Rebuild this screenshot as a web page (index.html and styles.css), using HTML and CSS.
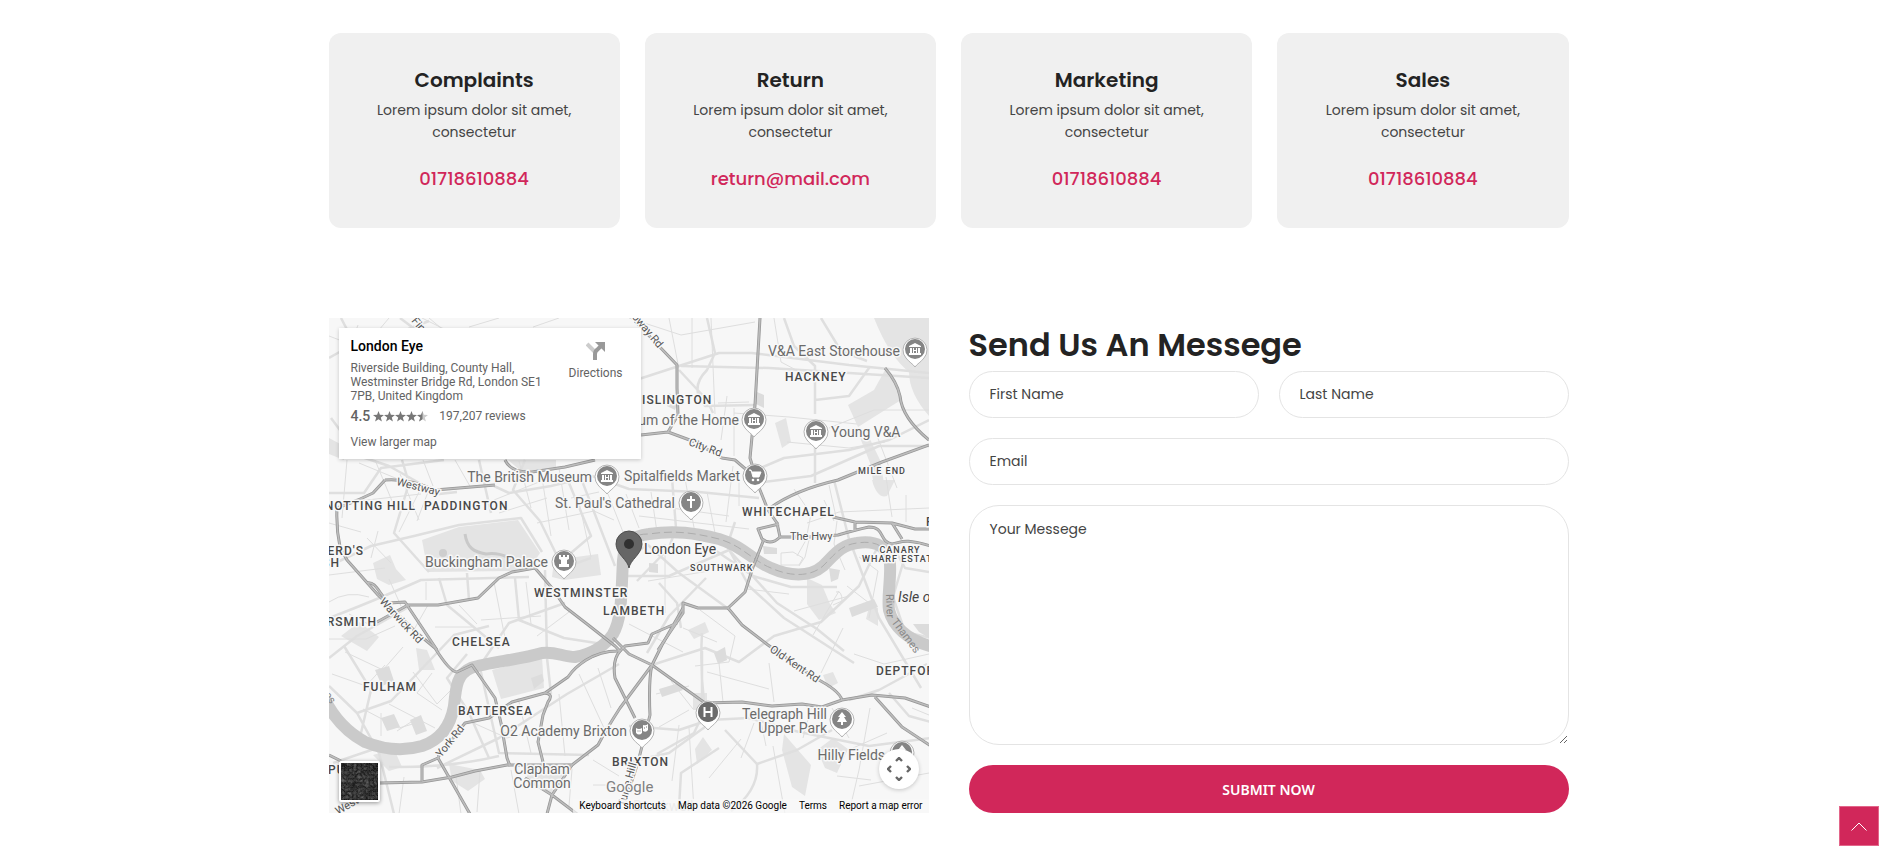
FILE: index.html
```html
<!DOCTYPE html>
<html lang="en">
<head>
<meta charset="utf-8">
<meta name="viewport" content="width=device-width, initial-scale=1">
<title>Contact</title>
<link rel="stylesheet" href="styles.css">
</head>
<body>
<main class="page">
  <section class="cards">
    <article class="card"><h3 class="card-title">Complaints</h3><p class="card-text">Lorem ipsum dolor sit amet, consectetur</p><a class="card-link" href="tel:01718610884">01718610884</a></article>
    <article class="card"><h3 class="card-title">Return</h3><p class="card-text">Lorem ipsum dolor sit amet, consectetur</p><a class="card-link" href="mailto:return@mail.com">return@mail.com</a></article>
    <article class="card"><h3 class="card-title">Marketing</h3><p class="card-text">Lorem ipsum dolor sit amet, consectetur</p><a class="card-link" href="tel:01718610884">01718610884</a></article>
    <article class="card"><h3 class="card-title">Sales</h3><p class="card-text">Lorem ipsum dolor sit amet, consectetur</p><a class="card-link" href="tel:01718610884">01718610884</a></article>
  </section>

  <section class="contact">
    <div class="map">
      <svg class="map-canvas" viewBox="0 0 600 495" preserveAspectRatio="xMidYMid slice" role="img" aria-label="Map of London">
        <defs>
          <path id="river" d="M-4 382C4 398 18 414 36 424C56 432 76 433 93 428C114 421 122 405 125 388C127 368 128 356 142 350C160 344 190 342 213 335C226 333 234 339 246 339C262 336 276 328 284 316C293 300 292 280 294 242C295 224 304 218 320 216C346 212 366 215 390 221C414 228 424 243 442 250C460 258 480 260 494 248C506 236 512 227 528 225C548 222 559 229 561 246C562 262 558 280 560 292C564 308 578 322 604 329"/>
          <g id="roads">
            <path d="M431 0L426 87L421 140L431 172L439 192L448 205L451 219Q442 228 433 221L429 211L450 206M435 221L424 249L416 274Q411 279 399 290H369L354 285V295L329 332"/>
            <path d="M306 3L348 47V70L349 97L339 114L312 117M339 114L366 124L393 140L406 142L420 154"/>
            <path d="M556 50Q568 64 571 78Q573 100 600 122M600 127L553 144L509 162Q466 172 441 190"/>
            <path d="M504 199L526 204L563 205L586 211H602M451 219H480L509 217Q526 212 540 209C556 209 550 224 563 226C574 224 574 220 602 228M563 205L573 221M526 204V212"/>
            <path d="M399 290L413 307L439 327L486 360Q510 372 513 382"/>
            <path d="M284 320L300 336L323 347L376 385L413 384L443 388L473 386L493 389L513 382L543 377L576 380L602 389M546 379L573 409L602 428"/>
            <path d="M348 305L323 316L319 325L296 328L291 333M333 327L323 347L291 390Q278 410 269 427L243 447H178L146 453L123 459L93 464L51 465M323 347C319 363 321 397 321 397L309 444L296 484M354 290L333 327"/>
            <path d="M56 162L44 175L29 182L8 190Q7 210 11 229L18 242L49 277L88 315L106 330Q121 354 128 354L143 347L166 380L172 405L178 440L181 448"/>
            <path d="M38 265C47 263 50 276 60 285L76 284L96 314L108 332M48 304L79 287H109L149 280L170 260L183 254L206 250L223 270L236 289L258 306L286 328L291 333C263 332 245 350 239 359L216 375L183 384L160 400L136 405L109 439"/>
            <path d="M216 375Q225 376 219 384L214 397L209 424L214 444M291 333Q283 342 286 360L306 400M109 440L141 496M93 463V447L109 440M196 460L223 477L248 496M243 447L223 477L218 496M0 437L12 443M56 162Q78 160 106 172L166 167M176 142Q182 155 203 154L236 149L266 142"/>
          </g>
        </defs>

        <rect width="600" height="495" fill="#f7f7f7"/>
        <g fill="#e4e4e4">
          <path d="M93 222L130 209L189 202L211 235L203 247L183 253L99 254Z"/>
          <path d="M519 87L545 72L556 52L569 70L572 82L529 109Z"/>
          <path d="M163 352L213 339L215 370L172 381ZM225 242L269 236L272 257L235 262L223 259Z"/>
          <path d="M545 0H600V98Q580 75 580 54Q560 38 545 0ZM179 142H227V149L193 154ZM0 120L15 128V142L0 136Z"/>
          <path d="M446 105L457 100L462 124L453 130ZM543 162Q548 181 558 178L566 162ZM478 260L493 267L501 286L507 295L490 302L478 286Z"/>
          <path d="M455 416L482 447L476 478L463 469L453 432ZM488 432L504 420L519 431L508 455L496 450ZM366 431L374 419L383 432L368 446Z"/>
          <path d="M44 245L61 237L67 251L77 262L60 267L48 261ZM120 446L151 452L156 461L139 473L123 463ZM203 448L242 445L222 475L196 462Z"/>
          <path d="M528 112L540 119L551 142L556 171L545 168L541 145ZM87 330L98 332L106 352L90 352ZM44 437L65 431L73 449L60 453Z"/>
          <path d="M359 312L376 304L380 314L365 321ZM364 375H378V392H364ZM540 289L549 290V308L537 301ZM494 357L504 354L509 365L499 370ZM12 318L30 304L50 319L38 333Z"/>
        </g>
        <g fill="none" stroke="#dfdfdf" stroke-width="2.500" stroke-linejoin="round">
          <path d="M310 61L350 48L390 35H423L520 47L600 55M352 48L440 50L600 60M350 52L378 82L384 95M378 0L386 35L378 52Q360 70 376 88L426 87M455 0L465 28L486 48V96M540 50L520 78L486 82M486 120V165M0 300Q40 285 92 262L200 259M0 248L42 228L85 218L130 207L192 200L213 234"/>
          <path d="M196 142L184 172L211 203M211 203L234 250L262 240M240 165L262 218L236 240M250 155L286 248M165 168L180 175L222 168L263 158L300 171L370 174L430 180M420 155L455 140L520 132L560 122L600 102M427 165L482 158L550 128L600 128"/>
          <path d="M294 242L319 227L350 255L401 292M308 263L340 230L347 210L343 160M296 258H340L400 232L448 285L488 311L515 333M380 228L424 258L462 269H508M406 204L398 228L420 268L455 300L525 345M352 310L348 285L330 265M318 335L340 298L377 260"/>
          <path d="M373 333V380M373 315Q371 350 375 384M323 347L376 330L410 344L445 318L492 304L530 268L550 226M300 408L350 412L380 402L420 400L470 414L540 428L602 420M328 436L365 415L379 385M396 412L428 446L468 432L503 412"/>
          <path d="M428 446Q430 472 402 493M520 382L550 372L598 346M560 375L580 398L602 404M522 226L550 300L592 370M505 162L521 225M296 445L340 435L380 406M350 490L352 455L390 430"/>
          <path d="M0 368L28 395L62 383L125 317L160 308M28 395L50 435L65 496M15 328L42 372L32 415M138 336L118 360L140 395L160 440M151 350L170 435L260 437M216 252L218 340L222 376M129 353L220 331"/>
          <path d="M108 450L170 420L238 376L290 346M60 449Q120 450 170 438M4 445L60 426M138 255L140 282M186 260L190 302L235 320L280 327M110 260L118 287L170 330M236 285L180 305L150 349"/>
          <path d="M0 40L23 27L77 12L100 3M2 100L30 138L60 148L110 176L128 174M12 0L42 58M71 0L87 12M0 175L35 175L52 150L115 142M73 142L80 165L65 215L100 254M150 142L162 195M565 230L576 250L600 254M574 245L564 279L576 314L602 320M492 0L512 33L538 43M0 340L28 318L78 290"/>
        </g>
        <g fill="none" stroke="#dedede" stroke-width="1">
          <path d="M363 0V50M382 0L386 96M405 95L460 99L528 106M405 90V138M340 0L349 46M500 110L545 92L600 92M545 110L568 170M458 124L520 130L556 124M389 85L420 84M398 78L392 122M300 0L352 17L426 4M445 0L452 44L482 60"/>
          <path d="M165 182L220 160M170 195L218 180M190 143L202 190M212 153L222 218M230 150L240 212M242 180L270 174M208 205L265 193L285 202M250 184L262 239M279 176L294 214M297 176L310 210M322 174L328 214M378 174L387 220M404 148L397 204M355 155L366 215M306 185L400 198M310 198L420 211M410 161V188"/>
          <path d="M465 171L482 196L477 222L468 238M480 222L476 239L470 248M508 203L505 226L516 252M452 235L464 234L474 240L470 247H452ZM478 205L510 194L600 190M495 182L505 203M557 159L563 199M577 177V204M500 167L507 199M510 273L484 317M518 268L544 288M507 274Q513 272 513 283L504 287M530 239L549 253L540 300"/>
          <path d="M336 226V295M319 263L380 253M371 292L406 318L400 344L366 348M354 310L388 324M418 271L460 276M465 293L520 278M300 306L354 334M440 345L445 384M492 355L514 310M525 336L555 346L600 336M378 354L440 371M394 384L390 345M342 363L364 391M327 376L360 368"/>
          <path d="M330 409L360 392M360 410L365 492M343 463L350 407M380 460L412 421M425 405L412 440M430 394L437 428M444 428L456 496M482 390L474 420M541 390L530 452L520 495M524 430L558 415M503 390L520 420M530 468L600 455M583 390L600 397M508 458L542 462"/>
          <path d="M0 205L32 214M0 257L56 250M30 145L76 164M90 174L70 214M38 220L62 245M49 213L42 240M20 184L92 176M71 156L90 202M99 174L88 203M0 284Q18 272 40 279M0 321H37L66 308M20 296L45 309M97 264V282M60 261L72 288M99 287L83 315M130 287L148 306M165 264L176 320M197 264L202 306M152 302L212 298M106 309H143M208 318L240 294"/>
          <path d="M3 356L37 368L56 347M16 334L54 352L74 329M34 391L70 410L94 403M60 386L106 410M84 354L108 386L124 370M103 355L88 375L113 392M68 413L82 404M52 418V395M75 459L70 496M127 458L132 496M151 453L148 494M182 452L190 496M243 451L240 488M140 403L178 420L211 411M189 380L202 435M230 376L236 438M250 356L275 410M269 350L282 390M264 442L290 458M264 467H300"/>
          <path d="M0 18L34 31L60 0M17 39L29 7M93 0L115 11M112 10L100 0M140 9L170 0M204 9L230 0M18 142L13 200M46 142L63 183M94 142L104 168M126 142L142 170"/>
        </g>
        <g fill="#dcdcdc"><path d="M340 75L350 82L346 92L338 88ZM428 74L435 77V90L427 86ZM46 352L60 348L65 363L53 368ZM81 402L92 397L98 413L87 417ZM52 400L65 396L71 409L58 413ZM520 290L545 281L549 289L523 299ZM434 228L448 230V236H435ZM500 250L511 252L509 261L502 264ZM320 245L329 246V255L320 254ZM385 335L396 329L398 342L389 346ZM330 371L350 365L354 372L333 379ZM584 306H600V320L590 314ZM202 360L213 356L215 363L205 371Z"/></g>
        <path d="M136 216C138 230 145 234 157 236C168 234 176 238 183 241" fill="none" stroke="#c9c9c9" stroke-width="3"/>
        <circle cx="114" cy="235" r="4" fill="#cecece"/>
        <use href="#river" fill="none" stroke="#cacaca" stroke-width="12"/>
        <path d="M298 232V222Q306 216 320 216C346 212 366 215 390 221C414 228 424 243 442 250C460 258 480 260 494 248C506 236 512 227 528 225C548 222 559 229 561 246" fill="none" stroke="#adadad" stroke-width="1" stroke-dasharray="8 4"/>
        <use href="#roads" fill="none" stroke="#969696" stroke-width="3" stroke-linejoin="round"/>
        <use href="#roads" fill="none" stroke="#bdbdbd" stroke-width="1.500" stroke-linejoin="round"/>

        <g class="district">
          <text x="456" y="63">HACKNEY</text><text x="313" y="86">ISLINGTON</text>
          <text x="413" y="198">WHITECHAPEL</text><text x="87" y="192" text-anchor="end">NOTTING HILL</text><text x="95" y="192">PADDINGTON</text>
          <text x="35" y="237" text-anchor="end">SHEPHERD'S</text><text x="11" y="249" text-anchor="end">BUSH</text>
          <text x="205" y="279">WESTMINSTER</text><text x="274" y="297">LAMBETH</text><text x="48" y="308" text-anchor="end">HAMMERSMITH</text>
          <text x="123" y="328">CHELSEA</text><text x="34" y="373">FULHAM</text><text x="129" y="397">BATTERSEA</text><text x="283" y="448">BRIXTON</text>
          <text x="-1" y="456">PUTNEY</text><text x="547" y="357">DEPTFORD</text><text x="597" y="208">POPLAR</text>
        </g>
        <g class="district district-small">
          <text x="529" y="156">MILE END</text><text x="361" y="253">SOUTHWARK</text><text x="571" y="235" text-anchor="middle">CANARY</text><text x="533" y="244">WHARF ESTATE</text>
        </g>
        <g class="street">
          <text transform="translate(359 127) rotate(20)">City Rd</text><text x="461" y="222">The Hwy</text>
          <text transform="translate(50 284) rotate(47)">Warwick Rd</text><text transform="translate(67 167) rotate(14)">Westway</text>
          <text transform="translate(112 440) rotate(-51)">York Rd</text><text transform="translate(440 333) rotate(34)">Old Kent Rd</text>
          <text transform="translate(82 3) rotate(50)">Finchley</text><text transform="translate(290 -16) rotate(50)">Holloway Rd</text>
          <text transform="translate(9 497) rotate(-30)">West Hill</text><text transform="translate(296 489) rotate(-75)">Tulse Hill</text>
          <text class="water" transform="translate(-5 377) rotate(55)">es</text>
          <text class="water" transform="translate(557 276) rotate(88)">River</text><text class="water" transform="translate(562 304) rotate(53)">Thames</text>
        </g>
        <g class="poi">
          <text x="571" y="38" text-anchor="end">V&amp;A East Storehouse</text><text x="410" y="107" text-anchor="end">Museum of the Home</text><text x="502" y="119">Young V&amp;A</text>
          <text x="411" y="163" text-anchor="end">Spitalfields Market</text><text x="263" y="164" text-anchor="end">The British Museum</text><text x="346" y="190" text-anchor="end">St. Paul's Cathedral</text>
          <text x="219" y="249" text-anchor="end">Buckingham Palace</text><text x="298" y="418" text-anchor="end">O2 Academy Brixton</text>
          <text x="213" y="456" text-anchor="middle">Clapham</text><text x="213" y="470" text-anchor="middle">Common</text>
          <text x="498" y="401" text-anchor="end">Telegraph Hill</text><text x="498" y="415" text-anchor="end">Upper Park</text><text x="556" y="442" text-anchor="end">Hilly Fields</text>
          <text class="poi-dark" x="315" y="236">London Eye</text><text class="poi-dark poi-italic" x="569" y="284">Isle of Dogs</text>
          <text class="poi-faint" x="304" y="493">Brockwell</text>
          <text class="brand" x="277" y="474">Google</text>
        </g>
        <defs>
          <g id="pin"><path d="M0 18C-2 15-6 13-9 9A12 12 0 1 1 9 9C6 13 2 15 0 18Z" fill="#fff" stroke="#b4b4b4" stroke-width="1"/><circle r="10" fill="#858585"/></g>
          <g id="museum"><use href="#pin"/><path d="M-6-2V-3L0-6L6-3V-2ZM-5-1H-3V4H-5ZM3-1H5V4H3ZM-6 4H6V6H-6ZM-2-1H-1V1H1V-1H2V4H1V2H-1V4H-2Z" fill="#fff"/></g>
        </defs>
        <use href="#museum" x="586" y="31"/><use href="#museum" x="425" y="101"/><use href="#museum" x="487" y="113"/><use href="#museum" x="278" y="158"/>
        <g transform="translate(426 157)"><use href="#pin"/><path d="M-6-5H-4L-2 2H4L6-3H-3" fill="#fff" stroke="#fff"/><circle cx="-2" cy="5" r="1.300" fill="#fff"/><circle cx="3" cy="5" r="1.300" fill="#fff"/></g>
        <g transform="translate(362 184)"><use href="#pin"/><path d="M0-6V6M-4-2H4" stroke="#fff" stroke-width="2"/></g>
        <g transform="translate(235 243)"><use href="#pin"/><path d="M-5-6H-3V-4H-1V-6H1V-4H3V-6H5V-2L3-1V3H5V6H-5V3H-3V-1L-5-2Z" fill="#fff"/></g>
        <g transform="translate(379 394)"><use href="#pin"/><circle r="10" fill="#6b6b6b"/><path d="M-3.500-5V5M3.500-5V5M-3.500 0H3.500" stroke="#fff" stroke-width="2"/></g>
        <g transform="translate(313 412)"><use href="#pin"/><path d="M-6-2Q-3 0 0-2V3Q-3 6-6 3ZM1-5Q4-4 6-6V0Q4 3 1 1Z" fill="#fff"/><path d="M-4.500 1H-3.500M-2.500 1H-1.500M2-2H3M4-3H5" stroke="#777"/></g>
        <g transform="translate(513 401)"><use href="#pin"/><path d="M0-7L4-2H2L5 3H1V6H-1V3H-5L-2-2H-4Z" fill="#fff"/></g>
        <g transform="translate(573 434)"><use href="#pin"/><path d="M0-7L4-2H2L5 3H-5L-2-2H-4Z" fill="#fff"/></g>
        <path d="M300 250C299 242 287 236 287 226A13 13 0 0 1 313 226C313 236 301 242 300 250Z" fill="#666" stroke="#4e4e4e"/><circle cx="300" cy="226" r="5" fill="#303030"/>
      </svg>

      <div class="place">
        <div class="place-info">
          <h4 class="place-name">London Eye</h4>
          <p class="place-address">Riverside Building, County Hall, Westminster Bridge Rd, London SE1 7PB, United Kingdom</p>
          <div class="rating">
            <span class="score">4.5</span>
            <svg class="stars" viewBox="0 0 55 11" aria-hidden="true">
              <defs><path id="star" d="M5.500 0L6.900 3.800L11 4L7.800 6.500L8.900 10.500L5.500 8.200L2.100 10.500L3.200 6.500L0 4L4.100 3.800Z"/><clipPath id="half"><rect width="5.500" height="11"/></clipPath></defs>
              <g fill="#777"><use href="#star"/><use href="#star" x="11"/><use href="#star" x="22"/><use href="#star" x="33"/></g>
              <use href="#star" x="44" fill="#ccc"/><g transform="translate(44)"><use href="#star" fill="#777" clip-path="url(#half)"/></g>
            </svg>
            <a class="place-link" href="#reviews">197,207 reviews</a>
          </div>
          <a class="place-link" href="#map">View larger map</a>
        </div>
        <a class="directions" href="#directions">
          <svg class="directions-icon" viewBox="0 0 20 20" aria-hidden="true"><path d="M1 3L10 12" stroke="#ccc" stroke-width="4"/><path d="M9 19V13Q9 10 12 8L15 5" fill="none" stroke="#999" stroke-width="4"/><path d="M9 1H19V11Z" fill="#999"/></svg>
          Directions
        </a>
      </div>

      <button class="satellite" type="button" aria-label="Show satellite imagery">
        <svg class="satellite-view" viewBox="0 0 36 36" aria-hidden="true"><filter id="grain" color-interpolation-filters="sRGB"><feTurbulence baseFrequency="0.25" numOctaves="4" seed="4"/><feColorMatrix values="0.3 0.2 0 0 0.04 0.3 0.2 0 0 0.04 0.3 0.2 0 0 0.04 0 0 0 0 1"/></filter><rect width="36" height="36" filter="url(#grain)"/></svg>
      </button>
      <button class="camera" type="button" aria-label="Map camera controls">
        <svg class="camera-icon" viewBox="0 0 24 24" aria-hidden="true"><path d="M9 4L12 1L15 4M9 20L12 23L15 20M4 9L1 12L4 15M20 9L23 12L20 15" fill="none" stroke="#666" stroke-width="2.400"/></svg>
      </button>
      <div class="map-footer"><a class="footer-item" href="#shortcuts">Keyboard shortcuts</a><span class="footer-item">Map data ©2026 Google</span><a class="footer-item" href="#terms">Terms</a><a class="footer-item" href="#report">Report a map error</a></div>
    </div>

    <form class="form">
      <h2 class="form-title">Send Us An Messege</h2>
      <div class="fields">
        <input class="field" type="text" placeholder="First Name" aria-label="First Name">
        <input class="field" type="text" placeholder="Last Name" aria-label="Last Name">
        <input class="field field-wide" type="email" placeholder="Email" aria-label="Email">
        <textarea class="field field-wide message" placeholder="Your Messege" aria-label="Your Messege"></textarea>
        <button class="submit field-wide" type="submit">SUBMIT NOW</button>
      </div>
    </form>
  </section>
</main>
<a class="to-top" href="#top" aria-label="Back to top"><svg class="to-top-icon" viewBox="0 0 16 9" aria-hidden="true"><path d="M0.500 8.500L8 1L15.500 8.500" fill="none" stroke="#fff"/></svg></a>
</body>
</html>
```
FILE: styles.css
```css
* { box-sizing: border-box; }
body { margin: 0; background: #fff; color: #444; font-family: Poppins, Inter, sans-serif; }
h2, h3, h4, p { margin: 0; }
a { text-decoration: none; }

.page { max-width: 1240px; margin: 0 auto; padding: 33px 0 48px; }

.cards { display: grid; grid-template-columns: repeat(4, 1fr); gap: 25px; margin-bottom: 90px; }
.card { display: flex; flex-direction: column; align-items: center; padding: 31px 40px 33px; border-radius: 12px; background: #f0f0f0; text-align: center; }
.card-title { color: #232323; font-size: 20px; line-height: 32px; font-weight: 600; }
.card-text { margin: 3px 0 19px; font-size: 14px; line-height: 22px; }
.card-link { color: #d1275a; font-size: 18px; line-height: 33px; font-weight: 500; }

.contact { display: grid; grid-template-columns: 1fr 1fr; gap: 40px; }

.map { position: relative; overflow: hidden; font-family: Roboto, sans-serif; }
.map-canvas { position: absolute; inset: 0; width: 100%; height: 100%; }
.map-canvas text { paint-order: stroke; stroke: #f8f8f8; stroke-width: 3px; stroke-linejoin: round; }
.district { fill: #484848; font-size: 12px; font-weight: 500; letter-spacing: 1px; }
.district-small { font-size: 9px; }
.street { fill: #555; font-size: 11px; }
.map-canvas .water { fill: #888; stroke: none; }
.poi { fill: #6b6b6b; font-size: 14px; }
.poi-dark { fill: #444; }
.poi-italic { font-style: italic; }
.poi-faint { fill: #ccc; }
.brand { fill: #808080; font-size: 15px; }

.place { position: absolute; top: 10px; left: 10px; width: 302px; display: flex; justify-content: space-between; padding: 10px 18px 10px 12px; background: #fff; box-shadow: 0 1px 4px rgba(0, 0, 0, 0.2); color: #636363; font-size: 12px; line-height: 14px; }
.place-info { width: 196px; }
.place-name { color: #000; font-size: 14px; line-height: 17px; font-weight: 500; }
.place-address { margin: 6px 0; }
.rating { display: flex; align-items: center; margin-bottom: 12px; }
.score { font-size: 14px; font-weight: 500; }
.stars { width: 55px; height: 11px; margin: 0 11px 0 3px; }
.place-link { color: #636363; }
.directions { display: flex; flex-direction: column; align-items: center; gap: 5px; padding-top: 3px; color: #636363; }
.directions-icon { width: 20px; height: 20px; }

.satellite { position: absolute; left: 10px; bottom: 11px; width: 41px; height: 41px; padding: 0; border: 2px solid #fff; border-radius: 2px; background: #444; box-shadow: 0 1px 4px rgba(0, 0, 0, 0.4); }
.satellite-view { display: block; width: 100%; height: 100%; }
.camera { position: absolute; right: 10px; bottom: 24px; display: grid; place-items: center; width: 40px; height: 40px; padding: 0; border: 0; border-radius: 50%; background: #fff; box-shadow: 0 1px 4px rgba(0, 0, 0, 0.2); }
.camera-icon { width: 24px; height: 24px; }
.map-footer { position: absolute; right: 0; bottom: 0; display: flex; background: rgba(248, 248, 248, 0.7); font-size: 10px; line-height: 14px; }
.footer-item { padding: 0 6px; color: #000; }

.form-title { color: #232323; font-size: 32px; line-height: 53px; font-weight: 600; }
.fields { display: grid; grid-template-columns: 1fr 1fr; gap: 20px; }
.field { width: 100%; height: 47px; padding: 0 20px; border: 1px solid #e4e4e4; border-radius: 25px; background: #fff; color: #444; font: 14px/22px Poppins, Inter, sans-serif; }
.field::placeholder { color: #444; opacity: 1; }
.field-wide { grid-column: 1 / -1; }
.message { display: block; height: 240px; padding: 12px 20px; border-radius: 30px; resize: both; }
.submit { height: 48px; border: 0; border-radius: 25px; background: #d1275a; color: #fff; font: 600 14px "Noto Sans", sans-serif; }

.to-top { position: fixed; right: 18px; bottom: 16px; display: grid; place-items: center; width: 40px; height: 40px; border: 1px solid #e3668a; background: #d1275a; }
.to-top-icon { width: 16px; height: 9px; }
```
